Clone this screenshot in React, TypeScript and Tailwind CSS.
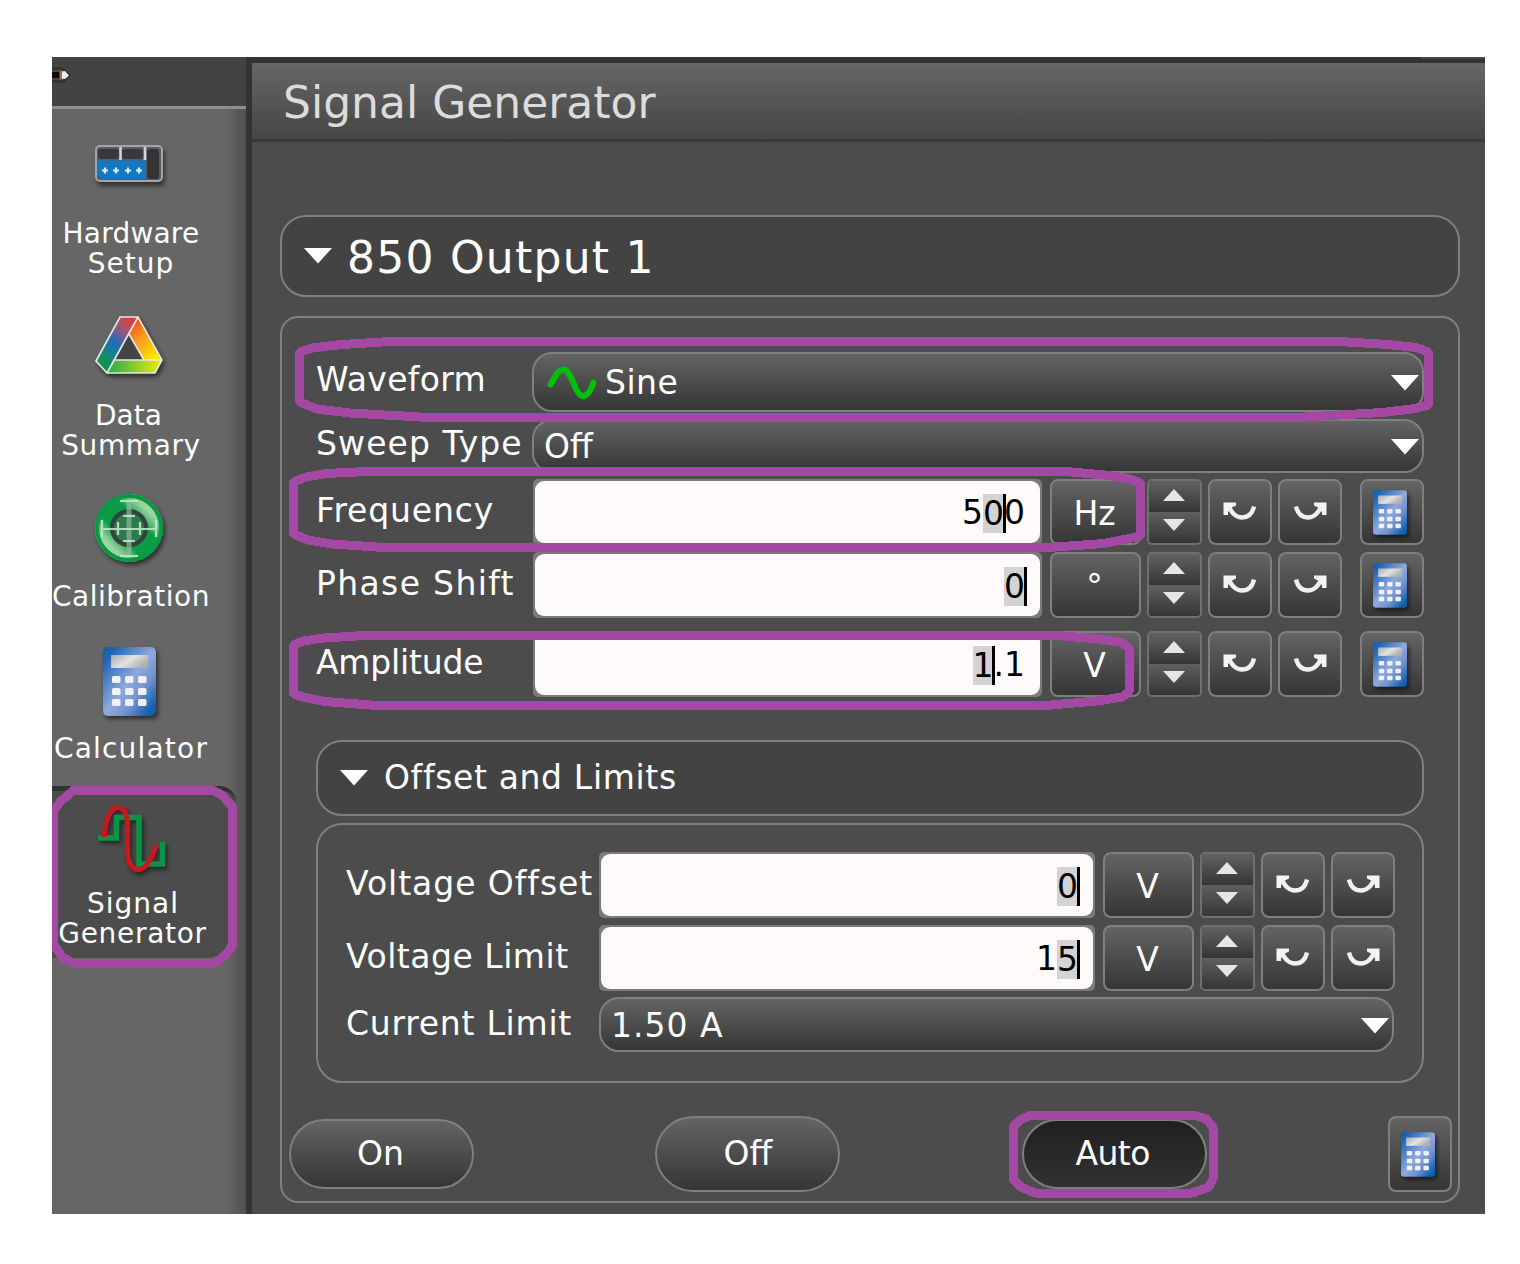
import React from "react";

const RAISED = "border-2 border-[#7f7f7f] bg-gradient-to-b from-[#646464] to-[#363636]";

function Triangle({ className = "" }: { className?: string }) {
  return (
    <svg viewBox="0 0 28 16" className={`h-4 w-7 shrink-0 ${className}`}>
      <path d="M0 0H28L14 15.5Z" fill="#fff" />
    </svg>
  );
}

function CalcIcon({ className = "" }: { className?: string }) {
  return (
    <svg viewBox="0 0 53 69" className={`shrink-0 drop-shadow-[2px_3px_2px_rgba(0,0,0,0.55)] ${className}`}>
      <defs>
        <linearGradient id="calcBody" x1="0" y1="0" x2="1" y2="1">
          <stop offset="0" stopColor="#0a5cae" />
          <stop offset="0.12" stopColor="#1f66b8" />
          <stop offset="0.5" stopColor="#8fa9da" />
          <stop offset="0.68" stopColor="#7394d0" />
          <stop offset="0.9" stopColor="#1462b0" />
          <stop offset="1" stopColor="#0a5cae" />
        </linearGradient>
        <linearGradient id="calcScreen" x1="0" y1="0" x2="1" y2="0.5">
          <stop offset="0" stopColor="#a9a9a9" />
          <stop offset="0.55" stopColor="#e3e3e3" />
          <stop offset="1" stopColor="#b0b0b0" />
        </linearGradient>
      </defs>
      <rect width="53" height="69" rx="5" fill="url(#calcBody)" />
      <rect x="8" y="8" width="37" height="13" fill="url(#calcScreen)" />
      {[29, 41, 52].map((y) =>
        [9, 22, 35].map((x) => (
          <rect key={`${x}-${y}`} x={x} y={y} width="8.5" height="7" rx="1.5" fill="#eef1f8" />
        )),
      )}
    </svg>
  );
}

function HardwareIcon() {
  return (
    <svg viewBox="0 0 68 37" className="mr-[5px] h-[37px] w-[68px] drop-shadow-[2px_4px_2px_rgba(0,0,0,0.5)]">
      <rect x="1" y="1" width="66" height="35" rx="4" fill="#5a5c60" stroke="#a2a6ac" strokeWidth="2" />
      <rect x="3" y="4" width="21" height="10" rx="3" fill="#38393d" />
      <rect x="27" y="4" width="21" height="10" rx="3" fill="#38393d" />
      <path d="M25.5 2V15M50 2V15" stroke="#d5d5d5" strokeWidth="2.5" />
      <rect x="52" y="4" width="12" height="30" rx="3" fill="#333438" />
      <path d="M2 15.5H51V34H7L2 30Z" fill="#1178c2" />
      {[10, 21, 33, 44].map((x) => (
        <path key={x} d={`M${x - 3} 25.5h6M${x} 22.5v6`} stroke="#d8ecfb" strokeWidth="2.2" />
      ))}
    </svg>
  );
}

function SummaryIcon() {
  return (
    <svg viewBox="0 0 68 60" className="mr-[5px] h-[60px] w-[68px] drop-shadow-[2px_3px_2px_rgba(0,0,0,0.55)]">
      <defs>
        <linearGradient id="sumLeft" x1="0.8" y1="0" x2="0.1" y2="1">
          <stop offset="0" stopColor="#dd3c3c" />
          <stop offset="0.2" stopColor="#a6556e" />
          <stop offset="0.48" stopColor="#1f6cc0" />
          <stop offset="0.8" stopColor="#109257" />
        </linearGradient>
        <linearGradient id="sumRight" x1="0" y1="0" x2="0.7" y2="1">
          <stop offset="0" stopColor="#f03a22" />
          <stop offset="0.5" stopColor="#fb9a1d" />
          <stop offset="1" stopColor="#ffe600" />
        </linearGradient>
        <linearGradient id="sumBottom">
          <stop offset="0" stopColor="#22a94c" />
          <stop offset="1" stopColor="#f4ec10" />
        </linearGradient>
      </defs>
      <path d="M34 21L49 45H20Z" fill="#444" />
      <path d="M25 2H43L12 58L1 46Z" fill="url(#sumLeft)" />
      <path d="M43 2L67 45H49L34 18Z" fill="url(#sumRight)" />
      <path d="M19 45H67L60 58H12Z" fill="url(#sumBottom)" />
      <g fill="none" stroke="#e6e8de" strokeWidth="1.7">
        <path d="M25 2H43L67 45L60 58H12L1 46Z" />
        <path d="M43 2L12 58M34 19L49 45M19 45H67" />
      </g>
    </svg>
  );
}

function CalibrationIcon() {
  return (
    <svg viewBox="0 0 68 68" className="mr-[5px] size-[68px] drop-shadow-[2px_3px_2px_rgba(0,0,0,0.55)]">
      <defs>
        <linearGradient id="calibRing" x1="0.85" y1="0.15" x2="0.15" y2="0.85">
          <stop offset="0" stopColor="#9ad6a4" />
          <stop offset="0.14" stopColor="#5dbb78" />
          <stop offset="0.28" stopColor="#0c9c47" />
          <stop offset="0.72" stopColor="#0c9c47" />
          <stop offset="0.86" stopColor="#5dbb78" />
          <stop offset="1" stopColor="#9ad6a4" />
        </linearGradient>
      </defs>
      <circle cx="34" cy="34" r="26" fill="none" stroke="url(#calibRing)" strokeWidth="16" />
      <circle cx="34" cy="34" r="32" fill="none" stroke="#079a44" strokeWidth="4" />
      <circle cx="34" cy="34" r="17" fill="#2d7a4a" stroke="#32423a" strokeWidth="4" />
      <path d="M34 6V62" stroke="#8fb79c" strokeWidth="5" opacity="0.7" />
      <g stroke="#bfe6c8" strokeWidth="2.2" opacity="0.9">
        <path d="M7 35H61" />
        <path d="M25 7H43M25 62H43M7 26V43M61 26V43" />
        <path d="M28 22H40M28 47H40M23 28V41M45 28V41" />
      </g>
    </svg>
  );
}

function SignalIcon() {
  return (
    <svg viewBox="0 0 69 70" className="ml-[2px] h-[70px] w-[69px] drop-shadow-[2px_3px_2px_rgba(0,0,0,0.5)]">
      <path d="M0 34H18.5V13.5H41V60H64.5V38" fill="none" stroke="#0c9446" strokeWidth="5.5" />
      <path
        d="M6.5 33C7 15 13 3.5 20 3.5C27 3.5 29.5 12 29.5 24V48C30 60 35 65.5 40 65.5C48 65.5 54 55 58 41"
        fill="none"
        stroke="#c8181f"
        strokeWidth="5"
      />
    </svg>
  );
}

function NavItem({ icon, label, className }: { icon: React.ReactNode; label: React.ReactNode; className: string }) {
  return (
    <div className={`flex w-[160px] flex-col items-center pr-[2px] ${className}`}>
      {icon}
      <div className="text-center text-[28px] leading-[30px] whitespace-nowrap">{label}</div>
    </div>
  );
}

function Sidebar() {
  return (
    <div className="flex w-[194px] shrink-0 flex-col bg-[#666]">
      <div className="h-[49px] bg-[#434343] pt-[9px]">
        <svg viewBox="0 0 20 18" className="h-[18px] w-[20px]">
          <path d="M0 1H10L19 9L12 17H0Z" fill="#343332" />
          <path d="M0 4H9V14H0Z" fill="#54443c" />
          <path d="M0 6H7V12H0Z" fill="#0f0c0b" />
          <path d="M8 4L12 6V13L8 14Z" fill="#8d7465" />
          <path d="M10 5.5L13 5L17 9.5L13 13L10 12.5Z" fill="#eee" />
        </svg>
      </div>
      <div className="h-[3px] bg-[#8e8e8e]" />
      <div className="flex-1 bg-gradient-to-r from-[#666] from-90% to-[#505050]">
        <NavItem
          className="gap-[37px] pt-[36px]"
          icon={<HardwareIcon />}
          label={<><span className="tracking-[0.2px]">Hardware</span><br /><span className="tracking-[1px]">Setup</span></>}
        />
        <NavItem
          className="gap-[26px] pt-[36px]"
          icon={<SummaryIcon />}
          label={<><span className="mr-[5px]">Data</span><br /><span className="tracking-[0.6px]">Summary</span></>}
        />
        <NavItem className="gap-[20px] pt-[33px]" icon={<CalibrationIcon />} label={<span className="tracking-[0.5px]">Calibration</span>} />
        <NavItem
          className="gap-[18px] pt-[35px]"
          icon={<CalcIcon className="mr-[3px] h-[69px] w-[53px]" />}
          label={<span className="tracking-[1.2px]">Calculator</span>}
        />
        <div className="mt-[22px] h-[172px] w-[184px] rounded-tr-[16px] rounded-br-[30px] border-t-[5px] border-[#333] bg-[#4c4c4c]">
          <NavItem
            className="gap-[15px] pt-[13px]"
            icon={<SignalIcon />}
            label={<><span className="ml-[4px] tracking-[1px]">Signal</span><br /><span className="ml-[3px] tracking-[0.7px]">Generator</span></>}
          />
        </div>
      </div>
    </div>
  );
}

function Combo({ className, children }: { className: string; children: React.ReactNode }) {
  return (
    <div className={`flex items-center justify-between rounded-[20px] pr-[3px] pl-[10px] ${RAISED} ${className}`}>
      <div className="flex items-center pt-[2px]">{children}</div>
      <Triangle className="mt-[2px]" />
    </div>
  );
}

function SineIcon() {
  return (
    <svg viewBox="0 0 50 34" className="mr-[8px] ml-[3px] h-[34px] w-[50px]">
      <path
        d="M3.5 18.5C8 11 11 3.5 16.5 3.5C25 3.5 28 30 36 30C41 30 44 24 46.5 16.5"
        fill="none"
        stroke="#00c00a"
        strokeWidth="6"
        strokeLinecap="round"
      />
    </svg>
  );
}

function Arc({ flip = false }: { flip?: boolean }) {
  return (
    <div className={`flex w-[64px] items-center justify-center rounded-[8px] pb-[2px] ${RAISED}`}>
      <svg viewBox="0 0 34 19" className={`h-[19px] w-[34px] ${flip ? "-scale-x-100" : ""}`}>
        <path d="M0.5 0.5H13V3.5L9 5.5L5 10V13H0.5Z" fill="#f4f4f4" />
        <path d="M6 5.5C10 12 13 15.5 19 15.5C26 15.5 29.5 11 31 4.5" fill="none" stroke="#f0f0f0" strokeWidth="4.4" />
      </svg>
    </div>
  );
}

function Spinner() {
  return (
    <div className="flex w-[55px] flex-col overflow-hidden rounded-[5px] border-2 border-[#707070]">
      <div className="flex flex-1 items-center justify-center bg-gradient-to-b from-[#626262] to-[#363636]">
        <svg viewBox="0 0 22 12" className="mt-[-4px] mr-[2px] h-[12px] w-[22px]">
          <path d="M0 12L11 0L22 12Z" fill="#e6e6e6" />
        </svg>
      </div>
      <div className="flex flex-1 items-center justify-center bg-gradient-to-b from-[#606060] to-[#363636]">
        <svg viewBox="0 0 22 12" className="mt-[-6px] mr-[2px] h-[12px] w-[22px]">
          <path d="M0 0H22L11 12Z" fill="#e6e6e6" />
        </svg>
      </div>
    </div>
  );
}

function Digit({ children }: { children: React.ReactNode }) {
  return <span className="h-[39px] bg-[#d3d3d3] leading-[39px]">{children}</span>;
}

function Caret() {
  return <span className="-mx-[1.5px] h-[39px] w-[3px] bg-black" />;
}

function CalcButton({ className = "" }: { className?: string }) {
  return (
    <div className={`flex w-[64px] items-center justify-center rounded-[8px] pr-[4px] ${RAISED} ${className}`}>
      <CalcIcon className="h-[45px] w-[34px]" />
    </div>
  );
}

function Field({
  label,
  labelClass,
  value,
  fieldClass,
  unit,
  calc = false,
}: {
  label: React.ReactNode;
  labelClass: string;
  value: React.ReactNode;
  fieldClass: string;
  unit: string;
  calc?: boolean;
}) {
  return (
    <div className="flex h-[66px]">
      <div className={`shrink-0 pt-[11px] leading-[42px] whitespace-nowrap ${labelClass}`}>{label}</div>
      <div className={`shrink-0 rounded-[5px] bg-[#7b7b7b] p-[2px] ${fieldClass}`}>
        <div className="flex h-full items-center justify-end rounded-[9px] bg-[#fffafa] pt-[2px] pr-[15px] text-black">{value}</div>
      </div>
      <div className={`ml-[8px] flex w-[91px] items-center justify-center rounded-[8px] pt-[4px] pr-[2px] ${RAISED}`}>{unit}</div>
      <div className="ml-[6px] flex">
        <Spinner />
      </div>
      <div className="ml-[6px] flex gap-[6px]">
        <Arc />
        <Arc flip />
      </div>
      {calc && <CalcButton className="ml-[18px]" />}
    </div>
  );
}

function Main() {
  return (
    <div className="flex w-[1233px] flex-col bg-[#4c4c4c]">
      <div className="flex h-[6px] justify-end bg-[#333]">
        <div className="h-[2px] w-[64px] bg-[#484848]" />
      </div>
      <div className="h-[79px] border-b-[3px] border-[#393939] bg-gradient-to-b from-[#666] to-[#464646] pl-[31px] text-[44px] leading-[80px] text-[#dcdcdc]">
        Signal Generator
      </div>
      <div className="mt-[73px] ml-[28px] flex h-[82px] w-[1180px] items-center rounded-[26px] border-2 border-[#7f7f7f] bg-[#434343] pl-[22px]">
        <Triangle />
        <span className="mt-[3px] ml-[15px] text-[44px] tracking-[1.25px]">850 Output 1</span>
      </div>
      <div className="mt-[19px] ml-[28px] h-[887px] w-[1180px] rounded-[18px] border-2 border-[#7f7f7f]">
        <div className="mt-[34px] ml-[34px] flex h-[60px]">
          <div className="w-[216px] pt-[7px] leading-[42px] tracking-[0.3px]">Waveform</div>
          <Combo className="w-[892px]">
            <SineIcon />
            <span className="tracking-[0.5px]">Sine</span>
          </Combo>
        </div>
        <div className="mt-[7px] ml-[34px] flex h-[54px]">
          <div className="w-[216px] pt-[4px] leading-[42px] tracking-[1.1px] whitespace-nowrap">Sweep Type</div>
          <Combo className="w-[892px]">Off</Combo>
        </div>
        <div className="mt-[6px] ml-[34px]">
          <Field
            label="Frequency"
            labelClass="w-[217px] tracking-[0.85px]"
            fieldClass="w-[509px]"
            value={<><span>5</span><Digit>0</Digit><Caret /><span>0</span></>}
            unit="Hz"
            calc
          />
        </div>
        <div className="mt-[7px] ml-[34px]">
          <Field
            label="Phase Shift"
            labelClass="w-[217px] tracking-[1.35px]"
            fieldClass="w-[509px]"
            value={<><Digit>0</Digit><Caret /></>}
            unit="°"
            calc
          />
        </div>
        <div className="mt-[13px] ml-[34px]">
          <Field
            label="Amplitude"
            labelClass="w-[217px] tracking-[-0.2px]"
            fieldClass="w-[509px]"
            value={<><Digit>1</Digit><Caret /><span>.1</span></>}
            unit="V"
            calc
          />
        </div>
        <div className="mt-[43px] ml-[34px] flex h-[76px] w-[1108px] items-center rounded-[26px] border-2 border-[#7f7f7f] bg-[#434343] pl-[22px]">
          <Triangle />
          <span className="mt-[-1px] ml-[16px] tracking-[0.65px]">Offset and Limits</span>
        </div>
        <div className="mt-[7px] ml-[34px] flex h-[260px] w-[1108px] flex-col rounded-[26px] border-2 border-[#7f7f7f] pt-[27px] pl-[28px]">
          <Field
            label="Voltage Offset"
            labelClass="w-[253px] tracking-[0.95px]"
            fieldClass="w-[496px]"
            value={<><Digit>0</Digit><Caret /></>}
            unit="V"
          />
          <div className="mt-[7px]">
            <Field
              label="Voltage Limit"
              labelClass="w-[253px] tracking-[0.5px]"
              fieldClass="w-[496px]"
              value={<><span>1</span><Digit>5</Digit><Caret /></>}
              unit="V"
            />
          </div>
          <div className="mt-[6px] flex h-[55px]">
            <div className="w-[253px] pt-[6px] leading-[42px] tracking-[0.75px] whitespace-nowrap">Current Limit</div>
            <Combo className="w-[795px]">
              <span className="tracking-[1px]">1.50 A</span>
            </Combo>
          </div>
        </div>
        <div className="mt-[33px] ml-[7px] flex h-[76px] w-[1163px] items-center justify-between">
          <div className={`flex h-[70px] w-[185px] items-center justify-center rounded-full pr-[2px] ${RAISED}`}>On</div>
          <div className={`flex h-[76px] w-[185px] items-center justify-center rounded-full ${RAISED}`}>Off</div>
          <div className="flex h-[70px] w-[185px] items-center justify-center rounded-full border-2 border-[#7f7f7f] bg-gradient-to-b from-[#202020] to-[#323232] pr-[3px] tracking-[-0.6px]">
            Auto
          </div>
          <div className="flex h-[76px]">
            <CalcButton />
          </div>
        </div>
      </div>
    </div>
  );
}

function Markers() {
  return (
    <svg
      viewBox="52 57 1433 1157"
      className="pointer-events-none absolute inset-0 h-full w-full"
      fill="none"
      stroke="#a349a4"
      strokeWidth="9"
      strokeLinejoin="bevel"
      shapeRendering="crispEdges"
    >
      <path d="M299.5 352L312 348L342 344.5L398 341H1330L1388 344.5L1416 347.5L1428.5 352V405L1412 409L1382 412.5L1305 417H420L350 413L317 409L299.5 402Z" />
      <path d="M293.5 482L306 477L326 473.5L367 471.5H1066L1110 475.5L1130 479L1140.5 483V536L1127 539L1104 543.5L1048 547.5H384L332 544L308 540L293.5 534Z" />
      <path d="M293.5 645L303 641L324 638L364 635.5H1057L1100 639L1122 642.5L1129 648V692L1122 697L1097 701L1045 705.5H377L325 701.5L305 697.5L293.5 694Z" />
      <path d="M74 790H212L222 795L232.5 807V945L228 952L216 963H73L62 957L53.5 944V811L60 802Z" />
      <path d="M1030 1115.5H1195L1206 1119L1213 1127V1179L1209 1187L1192 1193H1035L1021 1187L1013 1179V1127L1020 1120Z" />
    </svg>
  );
}

export default function App() {
  return (
    <div className="h-[1264px] w-[1520px] bg-white pt-[57px] pl-[52px] font-['DejaVu_Sans',sans-serif] text-[33px] leading-[40px] text-white">
      <div className="relative flex h-[1157px] w-[1433px] overflow-hidden bg-[#333]">
        <Sidebar />
        <div className="w-[6px] shrink-0 bg-[#333]" />
        <Main />
        <Markers />
      </div>
    </div>
  );
}
